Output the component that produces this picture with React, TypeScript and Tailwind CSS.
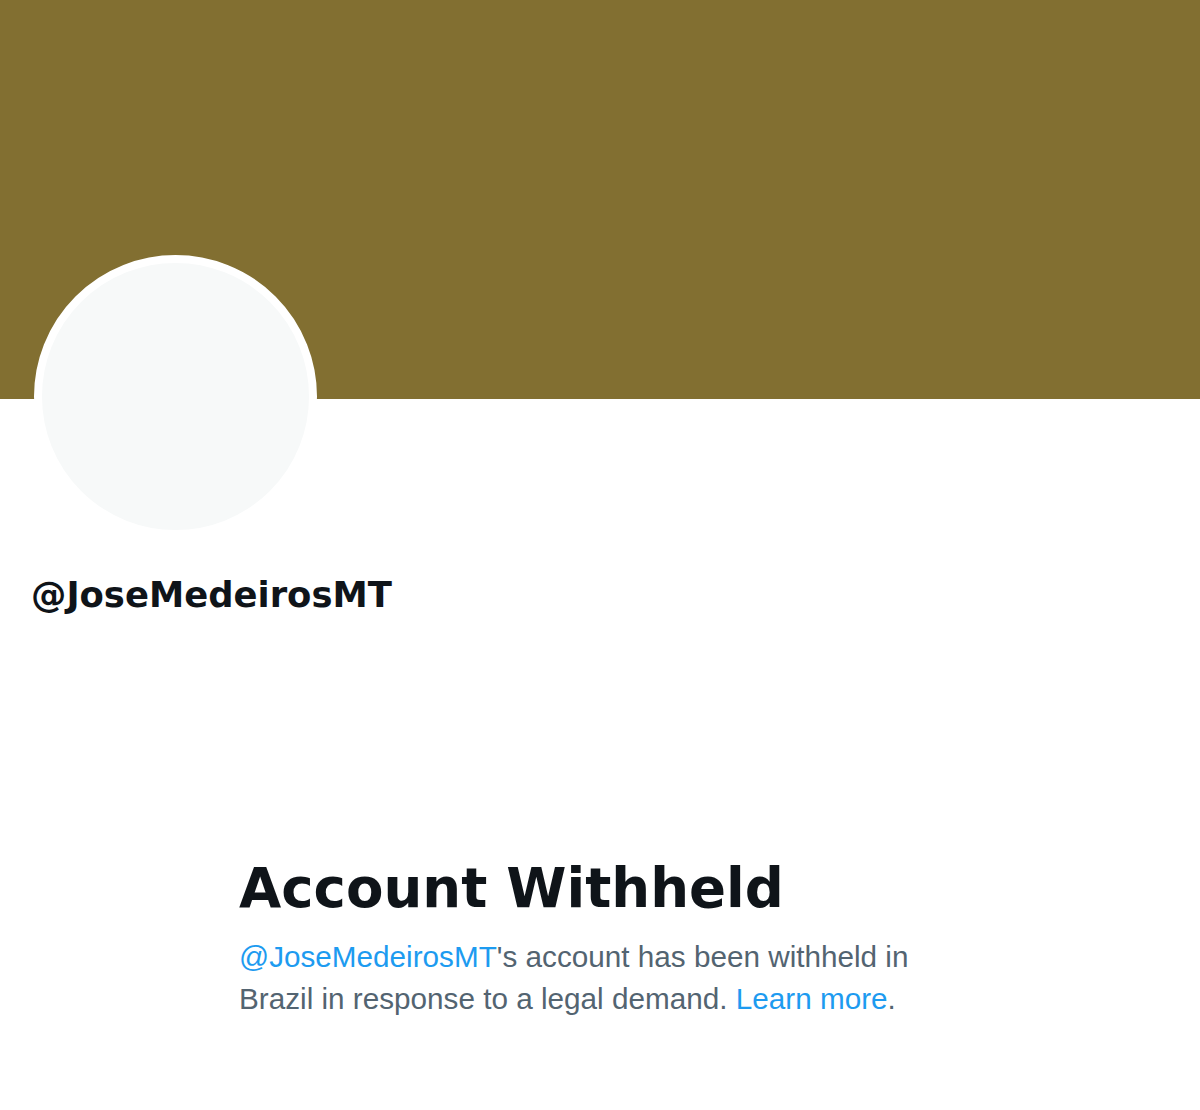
import React from 'react';

const HANDLE = 'JoseMedeirosMT';

export default function App() {
  return (
    <div className="min-h-[1110px] w-[1200px] bg-white">
      {/* Banner */}
      <div className="h-[399px] w-full bg-[#826f31]" />

      {/* Avatar */}
      <div className="ml-[34px] -mt-[144px] h-[283px] w-[283px] rounded-full border-[8px] border-white bg-[#f7f9f9]" />

      {/* Handle */}
      <div
        className="ml-[31px] mt-[36px] text-[35.4px] font-bold leading-[42px] text-[#0f1419]"
        style={{ fontFamily: '"DejaVu Sans", sans-serif' }}
      >
        @{HANDLE}
      </div>

      {/* Withheld notice */}
      <div className="ml-[239px] mt-[240px] max-w-[690px]">
        <h1
          className="text-[54.6px] font-bold leading-[64px] text-[#0f1419]"
          style={{ fontFamily: '"DejaVu Sans", sans-serif' }}
        >
          Account Withheld
        </h1>
        <p
          className="mt-[16px] text-[29.7px] leading-[42px] text-[#536471]"
          style={{ fontFamily: '"Liberation Sans", Arial, sans-serif' }}
        >
          <span className="text-[#1d9bf0]">@{HANDLE}</span>'s account has been withheld in Brazil in
          response to a legal demand. <span className="text-[#1d9bf0]">Learn more</span>.
        </p>
      </div>
    </div>
  );
}
